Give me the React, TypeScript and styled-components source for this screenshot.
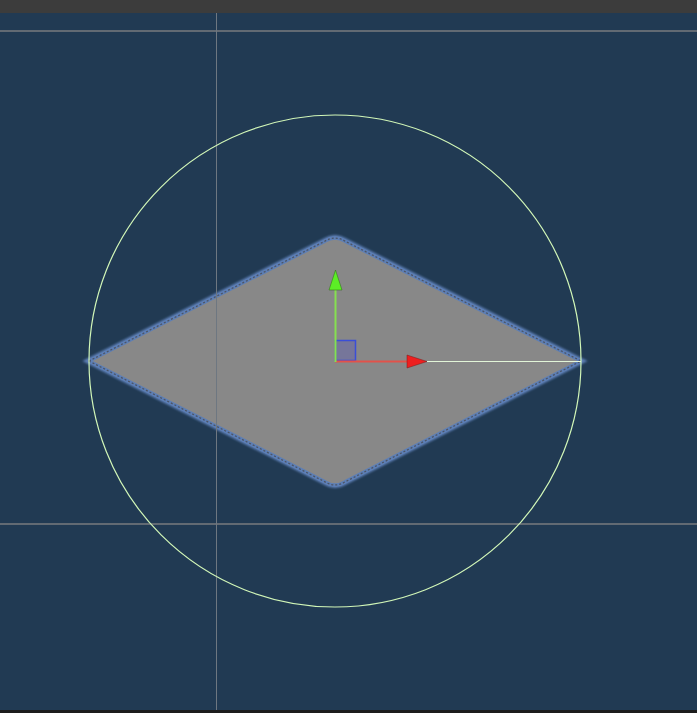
import React from "react";
import styled, { createGlobalStyle } from "styled-components";

const Global = createGlobalStyle`
  html, body { margin: 0; padding: 0; background: #1c1c1c; overflow: hidden; }
  body { font-family: "Liberation Sans", Arial, sans-serif; }
`;

const Window = styled.div`
  width: 697px;
  height: 713px;
  display: flex;
  flex-direction: column;
`;

const TopBar = styled.div`
  height: 13px;
  flex: none;
  background: #3c3c3c;
`;

const Viewport = styled.div`
  flex: 1;
  background: #213a53;
  overflow: hidden;
`;

const BottomEdge = styled.div`
  height: 3px;
  flex: none;
  background: #1c1c1c;
`;

const Scene = styled.svg`
  display: block;
  width: 697px;
  height: 697px;
`;

const diamond =
  "M89 348 L325 228.1 Q335 222 345 228.1 L581 348 L345 468.9 Q335 475 325 468.9 Z";

export default function App() {
  return (
    <Window>
      <Global />
      <TopBar />
      <Viewport>
        <Scene viewBox="0 0 697 697">
          <defs>
            <filter id="glow" x="-10%" y="-10%" width="120%" height="120%">
              <feGaussianBlur stdDeviation="1.2" />
            </filter>
          </defs>
          <line x1="0" y1="18" x2="697" y2="18" stroke="#626a73" strokeWidth="2" />
          <line x1="0" y1="511" x2="697" y2="511" stroke="#626a73" strokeWidth="2" />
          <path d={diamond} fill="#888888" stroke="#5d7fb6" strokeWidth="6" filter="url(#glow)" />
          <path d={diamond} fill="#888888" stroke="#5d7fb6" strokeWidth="3.5" strokeLinejoin="round" />
          <path d={diamond} fill="none" stroke="#4c5566" strokeWidth="1.3" strokeDasharray="2 2" />
          <line x1="216.5" y1="0" x2="216.5" y2="697" stroke="#6e7781" strokeWidth="1" />
          <circle cx="335" cy="348" r="246" fill="none" stroke="#d2f7b8" strokeWidth="1.2" />
          <rect x="335.5" y="327.5" width="20" height="20" fill="#76769a" stroke="#3a4ed8" strokeWidth="1.5" />
          <line x1="427" y1="348.5" x2="581" y2="348.5" stroke="#e2f5d8" strokeWidth="1.2" />
          <line x1="335" y1="348.5" x2="408" y2="348.5" stroke="#e2524a" strokeWidth="2" />
          <polygon points="407,342 407,355 427,348.5" fill="#ee1f1f" stroke="#7a1a1a" strokeWidth="0.5" />
          <line x1="335.5" y1="349" x2="335.5" y2="276" stroke="#86e050" strokeWidth="2" />
          <polygon points="329,277 342,277 335.5,257" fill="#5cee26" stroke="#2d6a14" strokeWidth="0.5" />
        </Scene>
      </Viewport>
      <BottomEdge />
    </Window>
  );
}
